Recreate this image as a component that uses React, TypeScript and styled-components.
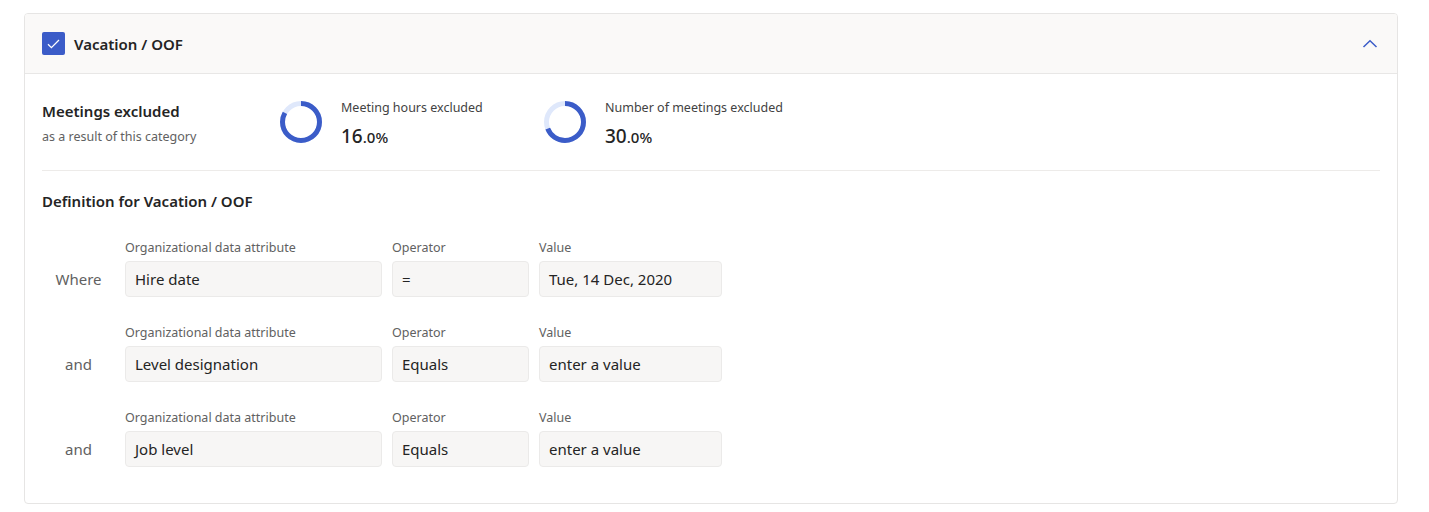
import React from 'react';
import styled, { createGlobalStyle } from 'styled-components';

const GlobalStyle = createGlobalStyle`
  body {
    margin: 0;
    background: #ffffff;
    font-family: "Noto Sans", "Open Sans", sans-serif;
    color: #242424;
  }
`;

const Page = styled.div`
  padding: 13px 31px 8px 24px;
`;

const Card = styled.section`
  border: 1px solid #e6e5e4;
  border-radius: 4px;
  background: #ffffff;
  overflow: hidden;
`;

const Header = styled.div`
  display: flex;
  align-items: center;
  height: 59px;
  padding: 0 19px 0 17px;
  background: #faf9f8;
  border-bottom: 1px solid #e8e7e6;
`;

const Check = styled.span`
  width: 23px;
  height: 23px;
  border-radius: 2px;
  background: #3b5cc8;
  display: flex;
  align-items: center;
  justify-content: center;
  margin-right: 9px;
`;

const Title = styled.h2`
  margin: 0;
  flex: 1;
  font-size: 15px;
  font-weight: 600;
  color: #242424;
`;

const Chevron = styled.button`
  border: none;
  background: none;
  padding: 0;
  display: flex;
  cursor: pointer;
`;

const Body = styled.div`
  padding: 0 17px 0 17px;
`;

const Summary = styled.div`
  display: flex;
  align-items: center;
  height: 96px;
  border-bottom: 1px solid #edebe9;
`;

const SummaryText = styled.div`
  width: 237px;
  padding-top: 2px;
`;

const Heading = styled.div`
  font-size: 15px;
  font-weight: 600;
  line-height: 20px;
`;

const Sub = styled.div`
  font-size: 12.5px;
  color: #616161;
  margin-top: 7px;
`;

const Metric = styled.div`
  display: flex;
  align-items: center;
  gap: 18px;
  width: 264px;
`;

const MetricText = styled.div`
  padding-top: 4px;
`;

const MetricLabel = styled.div`
  font-size: 12.5px;
  color: #424242;
  line-height: 16px;
`;

const MetricValue = styled.div`
  font-size: 19px;
  font-weight: 500;
  margin-top: 9px;
  line-height: 22px;

  small {
    font-size: 15px;
  }
`;

const Section = styled.div`
  padding: 20px 0 36px;
`;

const SectionTitle = styled.h3`
  margin: 0 0 29px;
  font-size: 15px;
  font-weight: 600;
`;

const Rule = styled.div`
  display: grid;
  grid-template-columns: 74px 258px 138px 184px;
  column-gap: 9px;
  row-gap: 6px;
  align-items: center;
  margin-bottom: 28px;

  &:last-child {
    margin-bottom: 0;
  }

  & > *:nth-child(n + 2) {
    margin-right: 1px;
  }
`;

const Joiner = styled.div`
  grid-row: 2;
  text-align: center;
  font-size: 15px;
  color: #616161;
`;

const FieldLabel = styled.div<{ col: number }>`
  grid-row: 1;
  grid-column: ${({ col }) => col};
  font-size: 12.5px;
  color: #616161;
  line-height: 15px;
`;

const Field = styled.div<{ col: number }>`
  grid-row: 2;
  grid-column: ${({ col }) => col};
  height: 34px;
  display: flex;
  align-items: center;
  padding: 0 9px;
  background: #f7f6f5;
  border: 1px solid #ebeae9;
  border-radius: 4px;
  font-size: 15px;
  color: #242424;
`;

const Donut = ({ percent }: { percent: number }) => {
  const r = 18.5;
  const c = 2 * Math.PI * r;
  const light = (percent / 100) * c;
  return (
    <svg width="44" height="44" viewBox="0 0 44 44">
      <circle cx="22" cy="22" r={r} fill="none" stroke="#dfe8fb" strokeWidth="5" />
      <circle
        cx="22"
        cy="22"
        r={r}
        fill="none"
        stroke="#3b5cc8"
        strokeWidth="5"
        strokeDasharray={`${c - light - 1.5} ${c}`}
        transform="rotate(-90 22 22)"
      />
    </svg>
  );
};

const rules = [
  { joiner: 'Where', attr: 'Hire date', op: '=', value: 'Tue, 14 Dec, 2020' },
  { joiner: 'and', attr: 'Level designation', op: 'Equals', value: 'enter a value' },
  { joiner: 'and', attr: 'Job level', op: 'Equals', value: 'enter a value' },
];

export default function App() {
  return (
    <Page>
      <GlobalStyle />
      <Card>
        <Header>
          <Check>
            <svg width="13" height="10" viewBox="0 0 13 10">
              <path d="M1 5.2 4.4 8.6 12 1" fill="none" stroke="#fff" strokeWidth="1.3" />
            </svg>
          </Check>
          <Title>Vacation / OOF</Title>
          <Chevron aria-label="Collapse">
            <svg width="16" height="10" viewBox="0 0 16 10">
              <path d="M1.5 8 8 1.8 14.5 8" fill="none" stroke="#3b5cc8" strokeWidth="1.5" />
            </svg>
          </Chevron>
        </Header>
        <Body>
          <Summary>
            <SummaryText>
              <Heading>Meetings excluded</Heading>
              <Sub>as a result of this category</Sub>
            </SummaryText>
            <Metric>
              <Donut percent={16} />
              <MetricText>
                <MetricLabel>Meeting hours excluded</MetricLabel>
                <MetricValue>
                  16<small>.0%</small>
                </MetricValue>
              </MetricText>
            </Metric>
            <Metric>
              <Donut percent={30} />
              <MetricText>
                <MetricLabel>Number of meetings excluded</MetricLabel>
                <MetricValue>
                  30<small>.0%</small>
                </MetricValue>
              </MetricText>
            </Metric>
          </Summary>
          <Section>
            <SectionTitle>Definition for Vacation / OOF</SectionTitle>
            {rules.map((r, i) => (
              <Rule key={i}>
                <FieldLabel col={2}>Organizational data attribute</FieldLabel>
                <FieldLabel col={3}>Operator</FieldLabel>
                <FieldLabel col={4}>Value</FieldLabel>
                <Joiner>{r.joiner}</Joiner>
                <Field col={2}>{r.attr}</Field>
                <Field col={3}>{r.op}</Field>
                <Field col={4}>{r.value}</Field>
              </Rule>
            ))}
          </Section>
        </Body>
      </Card>
    </Page>
  );
}
